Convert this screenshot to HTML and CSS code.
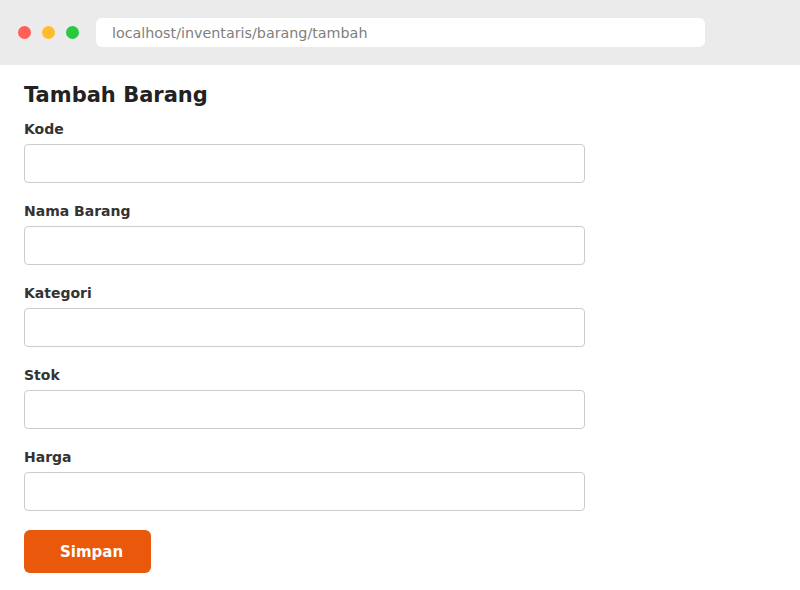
FILE: index.html
```html
<!DOCTYPE html>
<html lang="id">
<head>
  <meta charset="UTF-8" />
  <meta name="viewport" content="width=device-width, initial-scale=1.0"/>
  <title>Tambah Barang</title>
  <link rel="stylesheet" href="styles.css">
</head>
<body>

  <!-- Browser bar -->
  <header class="browser-bar">
    <div class="dots">
      <span class="dot red"></span>
      <span class="dot yellow"></span>
      <span class="dot green"></span>
    </div>
    <div class="url">localhost/inventaris/barang/tambah</div>
  </header>

  <!-- Form -->
  <main class="page">
    <h1>Tambah Barang</h1>
    <form>
      <div class="field">
        <label for="kode">Kode</label>
        <input type="text" id="kode">
      </div>
      <div class="field">
        <label for="nama">Nama Barang</label>
        <input type="text" id="nama">
      </div>
      <div class="field">
        <label for="kategori">Kategori</label>
        <input type="text" id="kategori">
      </div>
      <div class="field">
        <label for="stok">Stok</label>
        <input type="text" id="stok">
      </div>
      <div class="field">
        <label for="harga">Harga</label>
        <input type="text" id="harga">
      </div>
      <button type="submit" class="btn-save">Simpan</button>
    </form>
  </main>

</body>
</html>
```

FILE: styles.css
```css
body {
  margin: 0;
  font-family: "DejaVu Sans", sans-serif;
  background: #fff;
}
.browser-bar {
  height: 65px;
  background: #ebebeb;
  display: flex;
  align-items: center;
  padding: 0 18px;
  box-sizing: border-box;
}
.dots {
  display: flex;
  gap: 11px;
  margin-right: 17px;
}
.dot {
  width: 13px;
  height: 13px;
  border-radius: 50%;
}
.dot.red { background: #ff5f57; }
.dot.yellow { background: #febc2e; }
.dot.green { background: #28c840; }
.url {
  width: 609px;
  height: 29px;
  background: #fff;
  border-radius: 6px;
  padding: 0 16px;
  box-sizing: border-box;
  display: flex;
  align-items: center;
  font-size: 14.3px;
  color: #808080;
}
.page {
  padding: 16px 24px;
}
h1 {
  margin: 0 0 10px;
  font-size: 21px;
  line-height: 28px;
  color: #222;
}
.field {
  margin-bottom: 18px;
}
.field label {
  display: block;
  font-size: 14px;
  line-height: 20px;
  font-weight: bold;
  color: #333;
  margin-bottom: 5px;
}
.field input {
  display: block;
  width: 561px;
  height: 39px;
  box-sizing: border-box;
  border: 1px solid #ccc;
  border-radius: 4px;
  font-family: inherit;
  font-size: 14px;
  padding: 0 10px;
}
.btn-save {
  margin-top: 1px;
  width: 127px;
  height: 43px;
  padding: 0 0 0 36px;
  text-align: left;
  background: #ea580c;
  color: #fff;
  border: none;
  border-radius: 6px;
  font-family: inherit;
  font-size: 15px;
  font-weight: bold;
  cursor: pointer;
}
```
